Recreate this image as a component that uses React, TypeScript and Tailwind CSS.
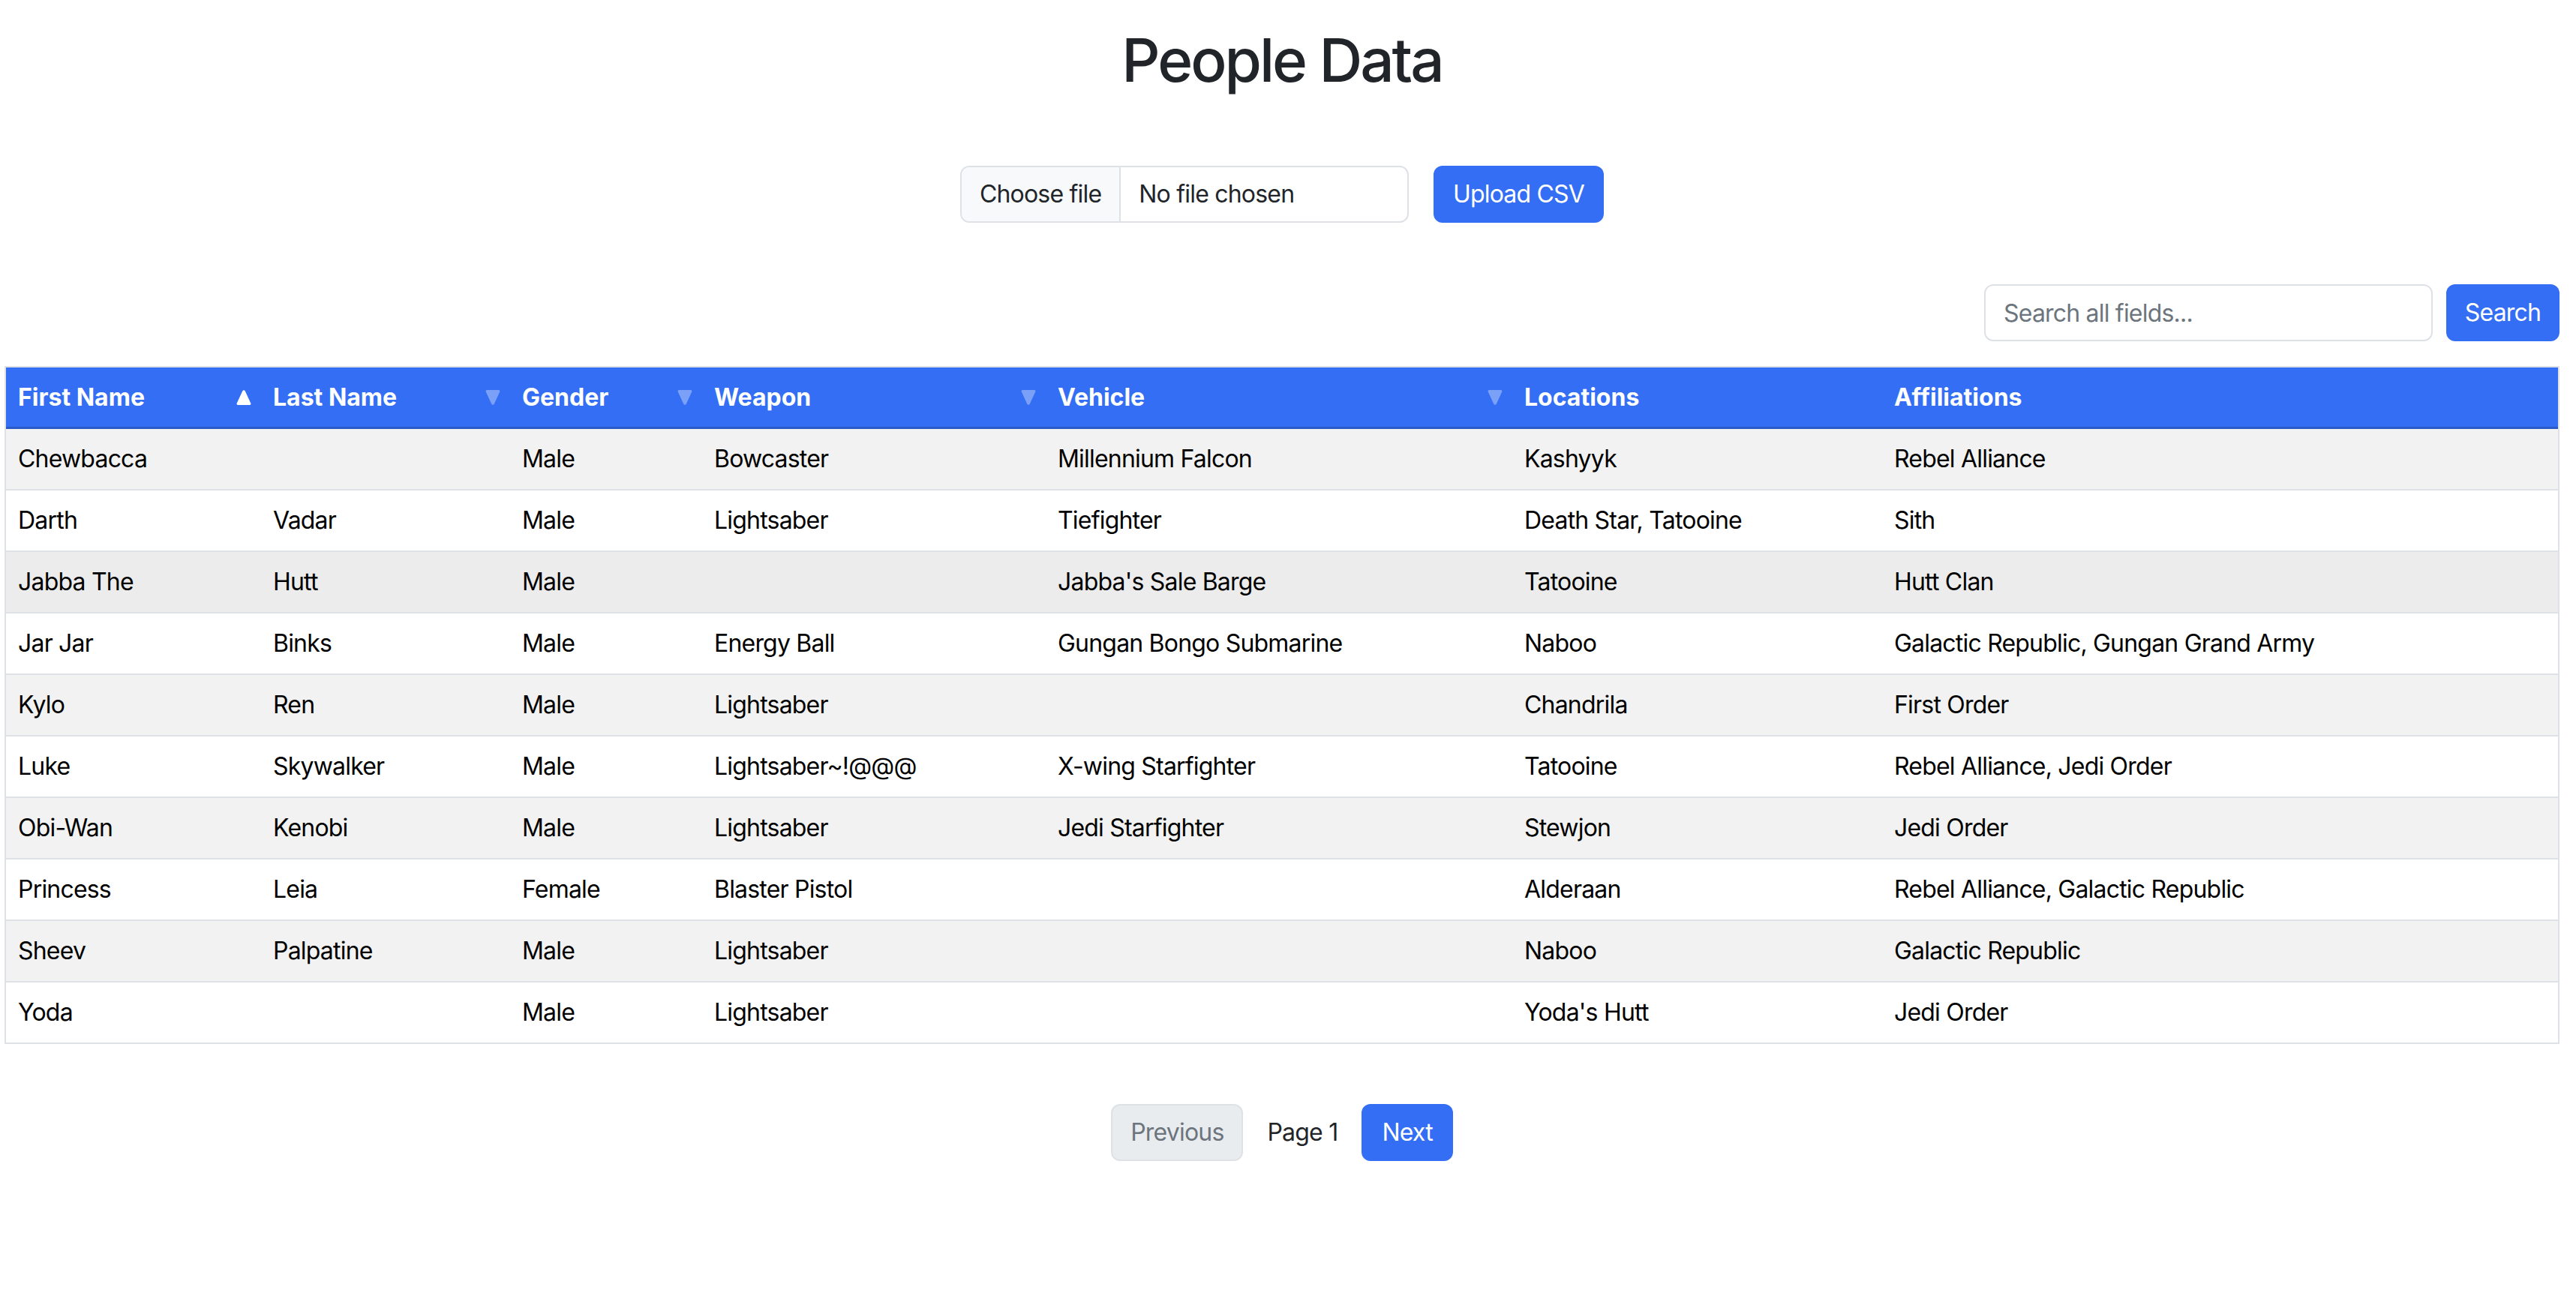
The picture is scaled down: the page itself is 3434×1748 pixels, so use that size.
import { useState } from 'react'

interface Person {
  firstName: string
  lastName: string
  gender: string
  weapon: string
  vehicle: string
  locations: string
  affiliations: string
}

const people: Person[] = [
  { firstName: 'Chewbacca', lastName: '', gender: 'Male', weapon: 'Bowcaster', vehicle: 'Millennium Falcon', locations: 'Kashyyk', affiliations: 'Rebel Alliance' },
  { firstName: 'Darth', lastName: 'Vadar', gender: 'Male', weapon: 'Lightsaber', vehicle: 'Tiefighter', locations: 'Death Star, Tatooine', affiliations: 'Sith' },
  { firstName: 'Jabba The', lastName: 'Hutt', gender: 'Male', weapon: '', vehicle: "Jabba's Sale Barge", locations: 'Tatooine', affiliations: 'Hutt Clan' },
  { firstName: 'Jar Jar', lastName: 'Binks', gender: 'Male', weapon: 'Energy Ball', vehicle: 'Gungan Bongo Submarine', locations: 'Naboo', affiliations: 'Galactic Republic, Gungan Grand Army' },
  { firstName: 'Kylo', lastName: 'Ren', gender: 'Male', weapon: 'Lightsaber', vehicle: '', locations: 'Chandrila', affiliations: 'First Order' },
  { firstName: 'Luke', lastName: 'Skywalker', gender: 'Male', weapon: 'Lightsaber~!@@@', vehicle: 'X-wing Starfighter', locations: 'Tatooine', affiliations: 'Rebel Alliance, Jedi Order' },
  { firstName: 'Obi-Wan', lastName: 'Kenobi', gender: 'Male', weapon: 'Lightsaber', vehicle: 'Jedi Starfighter', locations: 'Stewjon', affiliations: 'Jedi Order' },
  { firstName: 'Princess', lastName: 'Leia', gender: 'Female', weapon: 'Blaster Pistol', vehicle: '', locations: 'Alderaan', affiliations: 'Rebel Alliance, Galactic Republic' },
  { firstName: 'Sheev', lastName: 'Palpatine', gender: 'Male', weapon: 'Lightsaber', vehicle: '', locations: 'Naboo', affiliations: 'Galactic Republic' },
  { firstName: 'Yoda', lastName: '', gender: 'Male', weapon: 'Lightsaber', vehicle: '', locations: "Yoda's Hutt", affiliations: 'Jedi Order' },
]

type Sort = 'asc' | 'desc' | null

const columns: { key: keyof Person; label: string; width: string; sort: Sort }[] = [
  { key: 'firstName', label: 'First Name', width: 'w-[340px]', sort: 'asc' },
  { key: 'lastName', label: 'Last Name', width: 'w-[332px]', sort: 'desc' },
  { key: 'gender', label: 'Gender', width: 'w-[256px]', sort: 'desc' },
  { key: 'weapon', label: 'Weapon', width: 'w-[458px]', sort: 'desc' },
  { key: 'vehicle', label: 'Vehicle', width: 'w-[622px]', sort: 'desc' },
  { key: 'locations', label: 'Locations', width: 'w-[493px]', sort: null },
  { key: 'affiliations', label: 'Affiliations', width: '', sort: null },
]

function SortArrow({ dir }: { dir: 'asc' | 'desc' }) {
  // active column gets a solid white arrow, the rest are faded
  return (
    <svg width="20" height="22" viewBox="0 0 20 22" className={dir === 'asc' ? 'text-white' : 'text-white/35'}>
      {dir === 'asc' ? (
        <path d="M8.3 2.2a2 2 0 0 1 3.4 0l7.6 16.5A1.6 1.6 0 0 1 17.9 21H2.1A1.6 1.6 0 0 1 0.7 18.7z" fill="currentColor" />
      ) : (
        <path d="M8.3 19.8a2 2 0 0 0 3.4 0l7.6-16.5A1.6 1.6 0 0 0 17.9 1H2.1A1.6 1.6 0 0 0 0.7 3.3z" fill="currentColor" />
      )}
    </svg>
  )
}

export default function App() {
  const [query, setQuery] = useState('')
  const [page] = useState(1)

  const rowBg = (i: number) => {
    if (i === 2) return 'bg-[#ececec]' // hovered row
    return i % 2 === 0 ? 'bg-[#f2f2f2]' : 'bg-white'
  }

  return (
    <div className="min-h-screen bg-white font-['Inter',sans-serif] text-[32px] tracking-[-0.8px] text-[#212529]">
      <div className="pl-[6px] pr-[22px] pb-[100px]">
        <h1 className="pt-[32px] text-center text-[80px] font-medium leading-[96px] tracking-[-3px]">People Data</h1>

        {/* Upload */}
        <div className="mt-[93px] flex justify-center gap-[33px]">
          <label className="flex h-[76px] w-[598px] cursor-pointer overflow-hidden rounded-[12px] border-2 border-[#dee2e6] bg-white leading-[48px]">
            <span className="border-r-2 border-[#dee2e6] bg-[#f8f9fa] px-[24px] py-[12px]">Choose file</span>
            <span className="px-[24px] py-[12px]">No file chosen</span>
          </label>
          <button className="h-[76px] rounded-[12px] bg-[#346ef5] px-[26px] leading-[48px] text-white">Upload CSV</button>
        </div>

        {/* Search */}
        <div className="mt-[82px] flex justify-end gap-[18px]">
          <input
            type="text"
            value={query}
            onChange={(e) => setQuery(e.target.value)}
            placeholder="Search all fields..."
            className="h-[76px] w-[598px] rounded-[12px] border-2 border-[#dee2e6] px-[24px] leading-[48px] tracking-[-0.8px] text-[#212529] outline-none placeholder:text-[#6c757d]"
          />
          <button className="h-[76px] w-[151px] rounded-[12px] bg-[#346ef5] leading-[48px] text-white">Search</button>
        </div>

        {/* Table */}
        <div className="mt-[33px] border-2 border-[#dee2e6]">
          <table className="w-full table-fixed border-collapse text-left">
            <thead>
              <tr className="border-b-[3px] border-[#2b5ac6] bg-[#346ef5] text-white">
                {columns.map((c) => (
                  <th key={c.key} className={`${c.width} py-[16px] pl-[16px] pr-[13px] font-bold leading-[47px] tracking-normal`}>
                    <div className="flex items-center justify-between">
                      <span>{c.label}</span>
                      {c.sort && <SortArrow dir={c.sort} />}
                    </div>
                  </th>
                ))}
              </tr>
            </thead>
            <tbody>
              {people.map((p, i) => (
                <tr key={p.firstName} className={`${rowBg(i)} border-b-2 border-[#dee2e6] last:border-b-0 text-black`}>
                  {columns.map((c) => (
                    <td key={c.key} className="px-[16px] py-[16px] leading-[48px] whitespace-nowrap">
                      {p[c.key]}
                    </td>
                  ))}
                </tr>
              ))}
            </tbody>
          </table>
        </div>

        {/* Pagination */}
        <div className="mt-[80px] flex items-center justify-center gap-[32px]">
          <button disabled className="h-[76px] rounded-[12px] border-2 border-[#dee2e6] bg-[#e9ecef] px-[24px] leading-[48px] text-[#6c757d]">Previous</button>
          <span>Page {page}</span>
          <button className="h-[76px] rounded-[12px] bg-[#346ef5] px-[27px] leading-[48px] text-white">Next</button>
        </div>
      </div>
    </div>
  )
}
